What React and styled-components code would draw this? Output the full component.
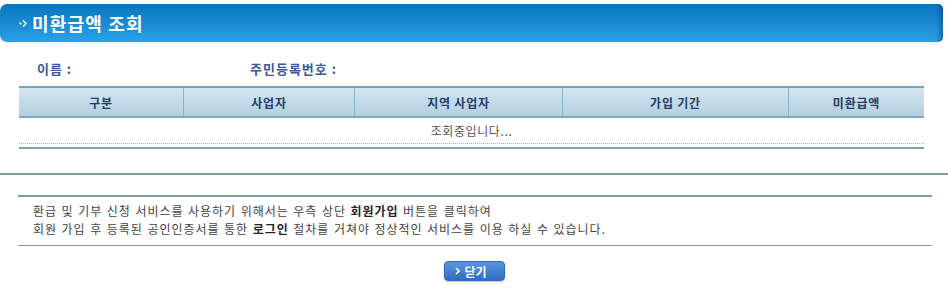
import React from "react";
import styled, { createGlobalStyle } from "styled-components";

const GlobalStyle = createGlobalStyle`
  body {
    margin: 0;
    background: #fff;
    font-family: "Noto Sans CJK KR", "Noto Sans", sans-serif;
  }
`;

const Page = styled.div`
  width: 948px;
  height: 292px;
  overflow: hidden;
  padding-top: 4px;
  box-sizing: border-box;
`;

const TitleBar = styled.div`
  display: flex;
  align-items: center;
  gap: 4px;
  height: 38px;
  margin-right: 5px;
  padding-left: 19px;
  border-radius: 7px 5px 5px 7px;
  background: linear-gradient(to bottom, #0877c0 0%, #1a8ad3 50%, #2aa2e8 100%);
  box-shadow: inset -9px 0 4px -6px rgba(0, 50, 110, 0.45);
`;

const TitleText = styled.h1`
  margin: 0;
  font-size: 18px;
  font-weight: 700;
  color: #fff;
  letter-spacing: 1.2px;
`;

const InfoRow = styled.div`
  display: flex;
  height: 44px;
  align-items: center;
  padding-left: 37px;
  padding-top: 8px;
  box-sizing: border-box;
`;

const Label = styled.span`
  width: ${(p) => p.w}px;
  font-size: 13px;
  font-weight: 700;
  color: #3b5a96;
  letter-spacing: 1px;
`;

const Table = styled.div`
  margin: 0 24px 0 19px;
  border-top: 2px solid #7ea2b4;
  border-bottom: 2px solid #7ea2b4;
  padding-bottom: 3px;
`;

const HeadRow = styled.div`
  display: grid;
  grid-template-columns: 164px 171px 208px 226px 1fr;
  height: 28px;
  background: linear-gradient(to bottom, #d4e6f2, #b4cfe0);
  border-bottom: 2px solid #86a8ba;
`;

const HeadCell = styled.div`
  display: flex;
  align-items: center;
  justify-content: center;
  font-size: 12px;
  font-weight: 700;
  color: #243c68;
  letter-spacing: 0.8px;
  border-left: ${(p) => (p.first ? "none" : "1px solid #8eb0c4")};
`;

const BodyRow = styled.div`
  height: 25px;
  display: flex;
  align-items: center;
  justify-content: center;
  font-size: 12px;
  color: #555;
  letter-spacing: 0.6px;
  border-bottom: 1px dotted #b0b0b0;
`;

const Divider = styled.hr`
  margin: 24px 0 0;
  border: none;
  height: 2px;
  background: #7e9dab;
`;

const Notice = styled.div`
  margin: 20px 16px 0 18px;
  border-top: 2px solid #7e9dab;
  border-bottom: 1px solid #7e9dab;
  padding: 5px 15px 7px;
`;

const NoticeLine = styled.p`
  margin: 0;
  font-size: 12px;
  line-height: 18px;
  color: #444;
  letter-spacing: 0.95px;
  word-spacing: 1px;
  white-space: nowrap;

  b {
    color: #2a1f2a;
    font-weight: 700;
  }
`;

const Footer = styled.div`
  display: flex;
  justify-content: center;
  padding-top: 15px;
`;

const CloseButton = styled.button`
  display: flex;
  align-items: center;
  gap: 5px;
  width: 61px;
  height: 20px;
  padding: 0 0 0 10px;
  border: 1px solid #2f67b8;
  border-radius: 4px;
  background: linear-gradient(to bottom, #5a96dc, #316cc2);
  box-shadow: 0 1px 2px rgba(0, 0, 0, 0.25);
  color: #fff;
  font-family: inherit;
  font-size: 12px;
  font-weight: 700;
  cursor: pointer;
`;

const TitleIcon = () => (
  <svg width="9" height="9" viewBox="0 0 9 9">
    <circle cx="1.5" cy="4.5" r="1.1" fill="#fff" />
    <path d="M4 1.5 L7 4.5 L4 7.5" stroke="#fff" strokeWidth="1.4" fill="none" />
  </svg>
);

const Chevron = () => (
  <svg width="5" height="8" viewBox="0 0 5 8">
    <path d="M1 1 L4 4 L1 7" stroke="#fff" strokeWidth="1.6" fill="none" />
  </svg>
);

const columns = ["구분", "사업자", "지역 사업자", "가입 기간", "미환급액"];

export default function App() {
  return (
    <Page>
      <GlobalStyle />
      <TitleBar>
        <TitleIcon />
        <TitleText>미환급액 조회</TitleText>
      </TitleBar>
      <InfoRow>
        <Label w={213}>이름 :</Label>
        <Label w={200}>주민등록번호 :</Label>
      </InfoRow>
      <Table>
        <HeadRow>
          {columns.map((c, i) => (
            <HeadCell key={c} first={i === 0}>
              {c}
            </HeadCell>
          ))}
        </HeadRow>
        <BodyRow>조회중입니다...</BodyRow>
      </Table>
      <Divider />
      <Notice>
        <NoticeLine>
          환급 및 기부 신청 서비스를 사용하기 위해서는 우측 상단 <b>회원가입</b> 버튼을 클릭하여
        </NoticeLine>
        <NoticeLine>
          회원 가입 후 등록된 공인인증서를 통한 <b>로그인</b> 절차를 거쳐야 정상적인 서비스를 이용 하실 수 있습니다.
        </NoticeLine>
      </Notice>
      <Footer>
        <CloseButton>
          <Chevron />
          닫기
        </CloseButton>
      </Footer>
    </Page>
  );
}
